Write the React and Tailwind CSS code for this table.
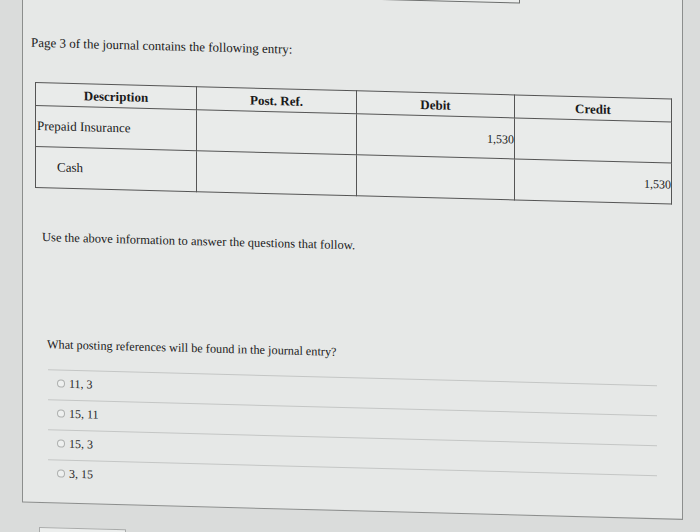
const rows = [
  { desc: 'Prepaid Insurance', indent: false, debit: '1,530', credit: '' },
  { desc: 'Cash', indent: true, debit: '', credit: '1,530' }
];

const options = ['11, 3', '15, 11', '15, 3', '3, 15'];

export default function App() {
  return (
    <div className="h-[532px] w-full overflow-hidden bg-[#dadcdb] font-['Liberation_Serif',serif] text-[#1a1a1a]">
      <div className="-mt-[40px] origin-top-left skew-y-[1.5deg]">
        {/* card */}
        <div className="ml-[22px] w-[661px] border border-[#8c8e8d] bg-[#e6e8e7] pb-[13px]">
          {/* bottom of the previous control */}
          <div className="ml-[277px] mt-[5px] h-[24px] w-[220px] border border-[#6b6d6c] bg-[#eceeed]" />

          <p className="ml-[8px] mt-[44px] text-[13px] leading-[16px]">
            Page 3 of the journal contains the following entry:
          </p>

          <table className="ml-[12px] mt-[31px] w-[636px] table-fixed border-collapse border border-[#555] bg-[#e9ebea] text-[13px]">
            <colgroup>
              <col className="w-[161px]" />
              <col className="w-[160px]" />
              <col className="w-[158px]" />
              <col className="w-[157px]" />
            </colgroup>
            <thead>
              <tr className="h-[21px]">
                <th className="border border-[#555] p-0 pt-[2px] text-center align-middle font-bold">Description</th>
                <th className="border border-[#555] p-0 pt-[2px] text-center align-middle font-bold">Post. Ref.</th>
                <th className="border border-[#555] p-0 pt-[2px] text-center align-middle font-bold">Debit</th>
                <th className="border border-[#555] p-0 pt-[2px] text-center align-middle font-bold">Credit</th>
              </tr>
            </thead>
            <tbody>
              {rows.map((r) => (
                <tr key={r.desc} className="h-[41px]">
                  <td className={`border border-[#555] p-0 align-middle ${r.indent ? 'pl-[21px]' : 'pl-[1px]'}`}>
                    {r.desc}
                  </td>
                  <td className="border border-[#555] p-0" />
                  <td className="border border-[#555] p-0 pt-[3px] text-right align-middle text-[12px]">{r.debit}</td>
                  <td className="border border-[#555] p-0 pt-[3px] text-right align-middle text-[12px]">{r.credit}</td>
                </tr>
              ))}
            </tbody>
          </table>

          <p className="ml-[19px] mt-[41px] text-[12.5px] leading-[16px]">
            Use the above information to answer the questions that follow.
          </p>

          <p className="ml-[24px] mt-[91px] text-[12.25px] leading-[16px]">
            What posting references will be found in the journal entry?
          </p>

          {/* answer choices */}
          <div className="ml-[25px] mt-[17px] w-[609px]">
            {options.map((o) => (
              <label key={o} className="flex h-[30px] items-center border-t border-[#c4c6c5] pb-[2px] pl-[9px] text-[12px] text-[#2a2a2a]">
                <span className="h-[8px] w-[8px] rounded-full border border-[#aeb0af] bg-[#eef0ef]" />
                <span className="ml-[4px]">{o}</span>
              </label>
            ))}
          </div>
        </div>

        {/* submit button, cut off */}
        <div className="ml-[39px] mt-[24px] h-[30px] w-[87px] border border-[#a9abaa] bg-[#eceeed]" />
      </div>
    </div>
  );
}
